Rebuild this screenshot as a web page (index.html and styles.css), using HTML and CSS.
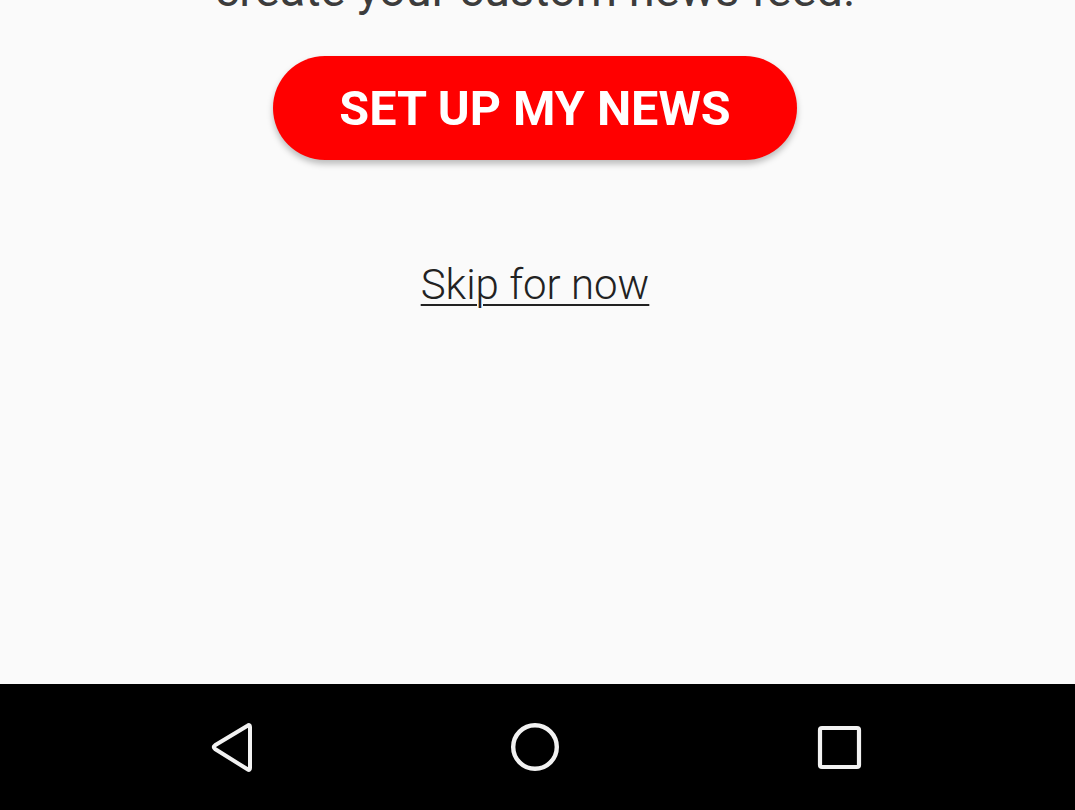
FILE: index.html
```html
<!DOCTYPE html>
<html>
<head>
<meta charset="utf-8">
<link rel="stylesheet" href="styles.css">
</head>
<body>
<div class="screen">
  <main class="content">
    <p class="intro">create your custom news feed.</p>
    <button class="cta">SET UP MY NEWS</button>
    <a class="skip" href="#">Skip for now</a>
  </main>
  <nav class="navbar">
    <span class="nav-btn">
      <svg width="60" height="60" viewBox="0 0 60 60"><path d="M49 10 L49 51 Q49 54 46.5 52.3 L14 32 Q11.5 30 14 28.3 L46.5 8.7 Q49 7 49 10 Z" fill="none" stroke="#f2f2f2" stroke-width="4" stroke-linejoin="round"/></svg>
    </span>
    <span class="nav-btn">
      <svg width="60" height="60" viewBox="0 0 60 60"><circle cx="30" cy="30" r="21.8" fill="none" stroke="#f2f2f2" stroke-width="4.4"/></svg>
    </span>
    <span class="nav-btn">
      <svg width="60" height="60" viewBox="0 0 60 60"><rect x="11" y="11" width="39" height="39" rx="2" fill="none" stroke="#f2f2f2" stroke-width="4.2"/></svg>
    </span>
  </nav>
</div>
</body>
</html>
```
FILE: styles.css
```css
html, body {
  margin: 0;
  padding: 0;
  background: #fafafa;
}
.screen {
  width: 1075px;
  height: 810px;
  display: flex;
  flex-direction: column;
  overflow: hidden;
  font-family: Roboto, "Liberation Sans", sans-serif;
}
.content {
  flex: 1;
  display: flex;
  flex-direction: column;
  align-items: center;
  padding-right: 5px;
}
.intro {
  margin: -38px 0 0 0;
  font-size: 47px;
  font-weight: 400;
  line-height: 56px;
  color: #3c3c3c;
  white-space: nowrap;
}
.cta {
  margin-top: 38px;
  width: 524px;
  height: 104px;
  border: none;
  border-radius: 52px;
  background: #ff0000;
  color: #fff;
  font-family: Roboto, "Liberation Sans", sans-serif;
  font-weight: 700;
  font-size: 48.5px;
  box-shadow: 0 4px 6px rgba(0,0,0,0.25);
  padding: 0;
}
.skip {
  margin-top: 97px;
  font-size: 42px;
  font-weight: 300;
  color: #222;
  line-height: 56px;
  text-decoration: underline;
  text-decoration-thickness: 2px;
  text-underline-offset: 5px;
}
.navbar {
  height: 126px;
  background: #000;
  display: flex;
  justify-content: center;
  align-items: center;
  gap: 244px;
  padding-right: 5px;
}
.nav-btn {
  display: flex;
  width: 60px;
  height: 60px;
}
```
